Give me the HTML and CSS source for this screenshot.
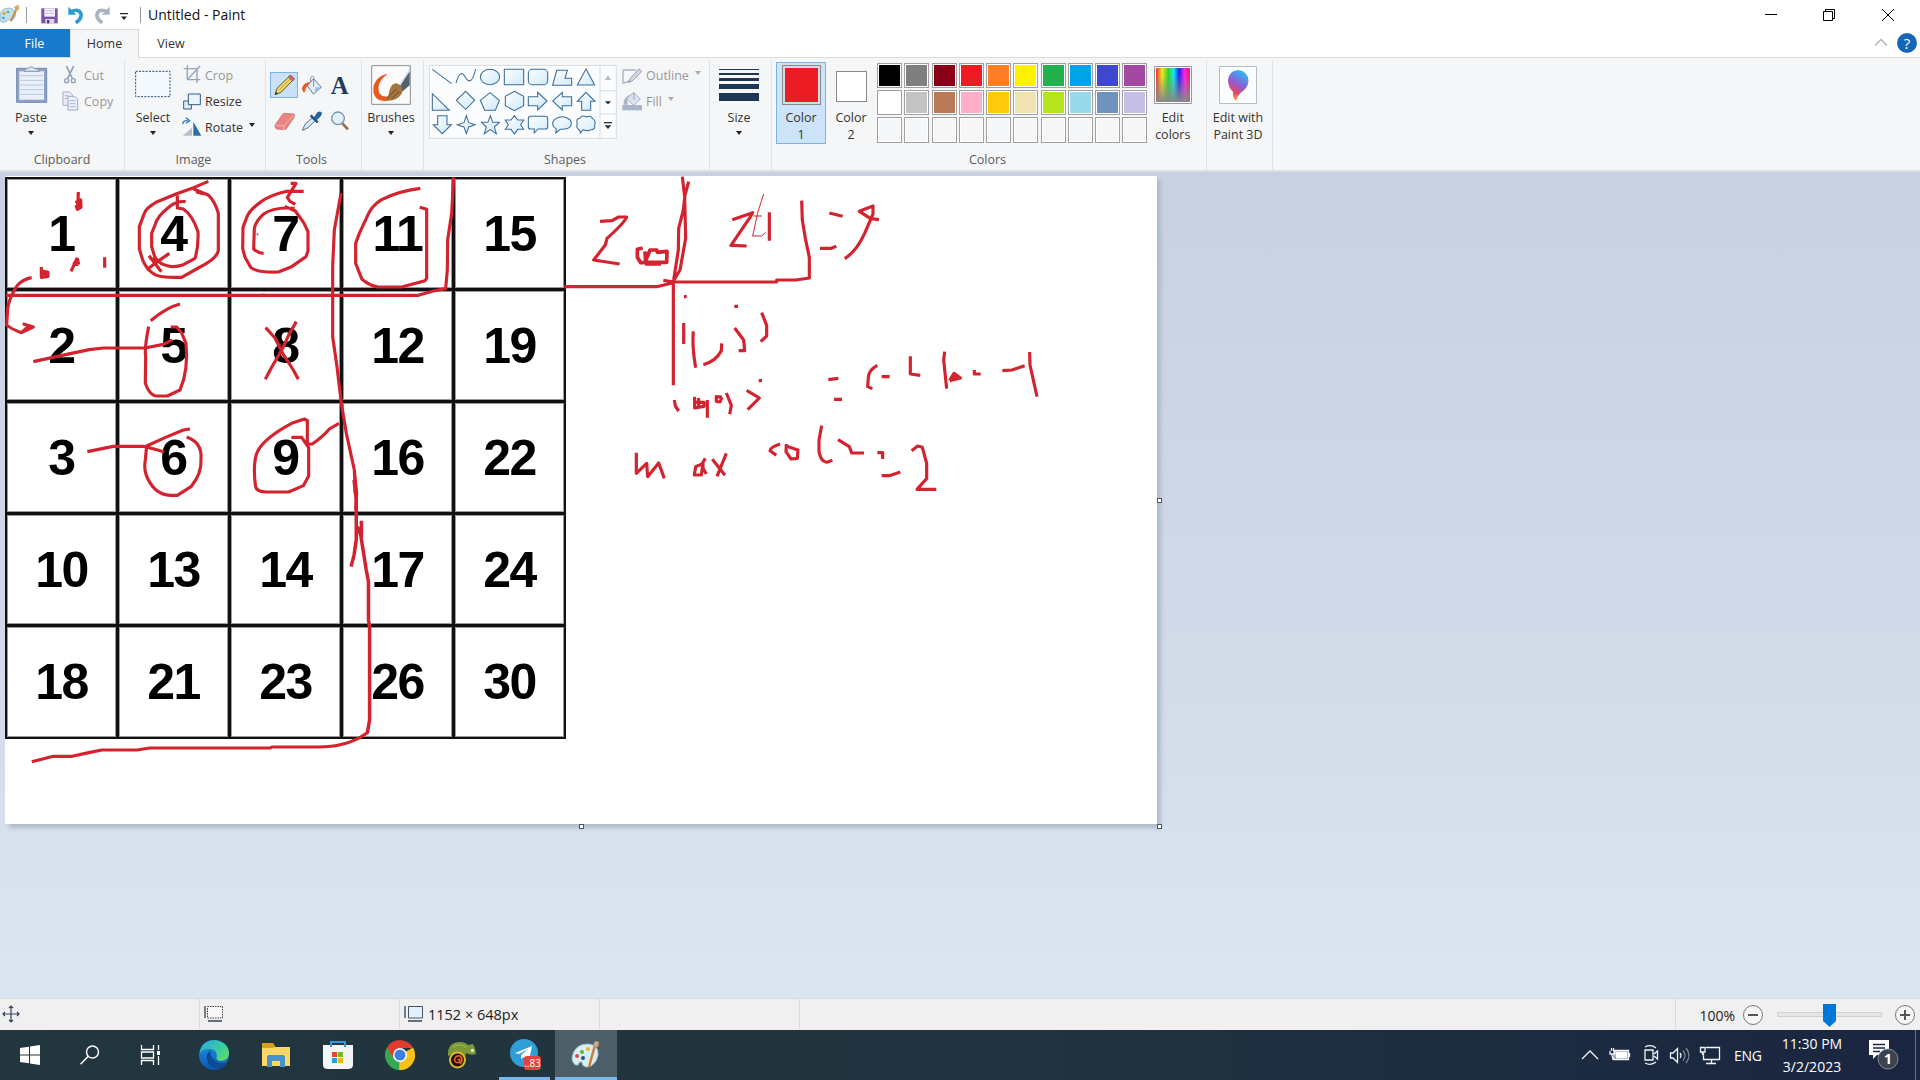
FILE: index.html
```html
<!DOCTYPE html>
<html lang="en">
<head>
<meta charset="utf-8">
<title>Untitled - Paint</title>
<link rel="stylesheet" href="styles.css">
</head>
<body>
<svg width="0" height="0" class="defs">
  <defs>
    <linearGradient id="shapeFill" x1="0" y1="0" x2="1" y2="1"><stop offset="0" stop-color="#fff"/><stop offset="1" stop-color="#cfeafb"/></linearGradient>
    <linearGradient id="spectrum"><stop offset="0" stop-color="#e33"/><stop offset=".18" stop-color="#f7e81c"/><stop offset=".36" stop-color="#2ed32e"/><stop offset=".52" stop-color="#1ee"/><stop offset=".68" stop-color="#22e"/><stop offset=".84" stop-color="#f2e"/><stop offset="1" stop-color="#e24"/></linearGradient>
    <linearGradient id="fade" x1="0" y1="0" x2="0" y2="1"><stop offset=".2" stop-color="#888" stop-opacity="0"/><stop offset="1" stop-color="#888"/></linearGradient>
    <linearGradient id="drop" x1=".7" y1="0" x2=".3" y2="1"><stop offset="0" stop-color="#25c3f5"/><stop offset=".45" stop-color="#8a5fd6"/><stop offset=".75" stop-color="#e8456b"/><stop offset="1" stop-color="#ffb02e"/></linearGradient>
    <linearGradient id="edgeA" x1="0" y1="0" x2="1" y2="1"><stop offset="0" stop-color="#2aa9e0"/><stop offset=".6" stop-color="#3ccf9a"/><stop offset="1" stop-color="#6be04a"/></linearGradient>
    <linearGradient id="edgeB" x1="0" y1="0" x2="0" y2="1"><stop offset="0" stop-color="#1f9be6"/><stop offset="1" stop-color="#0b56b4"/></linearGradient>
  </defs>
</svg>
<div class="window">
  <header class="titlebar">
    <svg class="app-icon" width="20" height="20" viewBox="0 0 60 60"><path d="M0 30Q6 12 28 12Q48 14 46 36Q40 52 30 48Q24 42 20 52Q8 60 0 50Z" fill="#bfe0ee" stroke="#7ca7bd" stroke-width="2"/><circle cx="12" cy="28" r="5" fill="#e8a23c"/><circle cx="10" cy="42" r="4" fill="#4b9cd6"/><circle cx="24" cy="24" r="4" fill="#5db85a"/><path d="M54 6L32 52" stroke="#c58a48" stroke-width="6"/><path d="M42 8L56 2L58 14L48 24Z" fill="#d9a968"/></svg>
    <i class="bar bar-a"></i>
    <svg class="save" width="17" height="16" viewBox="0 0 51 48"><path d="M1 1H50V46H1Z" fill="#7b54a6"/><path d="M10 1H42V26H10Z" fill="#f5f1fa"/><path d="M14 8H38M14 16H38" stroke="#c9bedb" stroke-width="3"/><path d="M13 33H40V46H13Z" fill="#ddd3ea"/><path d="M18 36H25V46H18Z" fill="#55367c"/></svg>
    <svg class="undo" width="18" height="18" viewBox="0 0 54 54"><path d="M4 2V26H28Z" fill="#2c9ad4"/><path d="M12 17Q36 6 42 24Q44 40 26 50" fill="none" stroke="#2c9ad4" stroke-width="11"/></svg>
    <svg class="redo" width="18" height="18" viewBox="0 0 54 54"><path d="M50 2V26H26Z" fill="#a9b5c2"/><path d="M42 17Q18 6 12 24Q10 40 28 50" fill="none" stroke="#a9b5c2" stroke-width="11"/></svg>
    <svg class="quick" width="8" height="8" viewBox="0 0 8 8"><path d="M0 .6H8" stroke="#222" stroke-width="1.2"/><path d="M1 3.5H7L4 7Z" fill="#222"/></svg>
    <i class="bar bar-b"></i>
    <h1 class="title">Untitled - Paint</h1>
    <svg class="controls" width="130" height="14" viewBox="0 0 130 14"><path d="M0 6.5H12" stroke="#000"/><path d="M58.5 3.5H67.5V12.5H58.5ZM60.500 3.500V1.500H69.500V10.500H67.500" fill="none" stroke="#000"/><path d="M117 1L129 13M129 1L117 13" stroke="#000" fill="none"/></svg>
  </header>
  <nav class="tabs">
    <span class="tab file">File</span><span class="tab home">Home</span><span class="tab view">View</span>
    <svg class="help" width="42" height="20" viewBox="0 0 42 20"><path d="M0 12.500L6 6.500L12 12.500" fill="none" stroke="#b5b5b5" stroke-width="1.500"/><circle cx="32" cy="10" r="10" fill="#1565b8"/><text x="32" y="15.500" text-anchor="middle" class="help-mark">?</text></svg>
  </nav>
  <section class="ribbon">
    <div class="group g-clipboard">
      <div class="body">
        <div class="big w62"><svg class="paste" width="32" height="38" viewBox="50 198 96 112"><path d="M52 204H142V306H52Z" fill="#8fa3c6" stroke="#7187ad" stroke-width="3"/><path d="M60 213H134V298H60Z" fill="#e9f0fa"/><path d="M62 226H132M62 240H132M62 254H132M62 268H132M62 282H132" stroke="#b9c6dc" stroke-width="3"/><path d="M74 213Q76 204 88 204Q96 194 104 204Q116 204 120 213Z" fill="#dde4ef" stroke="#8696b2" stroke-width="3"/></svg><span>Paste</span><b class="arrow"></b></div>
        <div class="rows clip-rows">
          <div class="row off"><svg width="20" height="20" viewBox="184 196 60 60"><path d="M200 199L218 236M222 199L204 236" stroke="#8f9fb8" stroke-width="5"/><circle cx="201" cy="243" r="6" fill="none" stroke="#8f9fb8" stroke-width="4"/><circle cx="221" cy="243" r="6" fill="none" stroke="#8f9fb8" stroke-width="4"/></svg><span>Cut</span></div>
          <div class="row off"><svg width="20" height="20" viewBox="182 273 60 60"><path d="M188 276H208L216 284V316H188Z" fill="#e9eef6" stroke="#a0b0cc" stroke-width="3"/><path d="M203 289H223L232 298V330H203Z" fill="#edf2fa" stroke="#98a9c8" stroke-width="3"/><path d="M193 287H203M193 295H200M208 302H226M208 311H226M208 320H226" stroke="#a7b6d0" stroke-width="3"/></svg><span>Copy</span></div>
        </div>
      </div><div class="label">Clipboard</div>
    </div>
    <div class="group g-image">
      <div class="body">
        <div class="big w56"><svg width="36" height="38" viewBox="407 198 108 114"><path d="M409 214H512V290H409Z" fill="#f4f9fe" stroke="#274a75" stroke-width="3" stroke-dasharray="6 4"/></svg><span>Select</span><b class="arrow"></b></div>
        <div class="rows">
          <div class="row off"><svg width="20" height="20" viewBox="548 196 60 60"><path d="M564 197V240H603M553 207H593V250M564 240L602 199" fill="none" stroke="#94a3bb" stroke-width="4"/></svg><span>Crop</span></div>
          <div class="row"><svg width="20" height="20" viewBox="546 274 60 60"><path d="M551 304H574V328H551Z" fill="#e2effa" stroke="#2b5d91" stroke-width="3"/><path d="M565 283H601V315H565Z" fill="#eaf5fd" stroke="#2b5d91" stroke-width="3"/></svg><span>Resize</span></div>
          <div class="row"><svg width="20" height="20" viewBox="546 348 60 60"><path d="M580 362V404H604Z" fill="#2d6ea7"/><path d="M576 380V404H548Z" fill="#b9bec6"/><path d="M548 370Q548 358 563 359" fill="none" stroke="#2d7bbd" stroke-width="4"/><path d="M558 350L569 359L558 367" fill="none" stroke="#2d7bbd" stroke-width="4"/></svg><span>Rotate</span><b class="arrow side"></b></div>
        </div>
      </div><div class="label">Image</div>
    </div>
    <div class="group g-tools">
      <div class="body tool-grid">
        <svg class="tool on" viewBox="811 216 84 78"><path d="M826 284L832 265L870 228L881 239L844 277Z" fill="#f5d860" stroke="#555537" stroke-width="3"/><path d="M839 270L875 233" stroke="#b99b35" stroke-width="3"/><path d="M866 231L873 225L885 237L878 243Z" fill="#d3646f" stroke="#6f5259" stroke-width="2"/><path d="M826 284L829 275L835 281Z" fill="#333"/></svg>
        <svg class="tool" viewBox="897 216 84 78"><path d="M924 256L944 236L967 262L943 282Z" fill="#e3eef7" stroke="#5f7a95" stroke-width="3"/><path d="M944 260V232Q939 224 935 235V248" fill="none" stroke="#8591a0" stroke-width="3"/><path d="M946 282L967 262L950 262Z" fill="#94bfe0"/><path d="M934 246Q914 248 909 264Q912 284 919 272Q920 262 928 256Z" fill="#e6592a"/></svg>
        <svg class="tool" viewBox="980 216 84 78"><text x="1021" y="282" class="letter" text-anchor="middle">A</text></svg>
        <svg class="tool" viewBox="811 323 84 78"><path d="M826 374L848 343Q851 338 858 339L884 341Q886 348 883 352L861 384Q858 389 851 388L830 386Q825 380 826 374Z" fill="#e98484" stroke="#c46d6d" stroke-width="2"/><path d="M828 374L852 377L884 343M852 377V388" fill="none" stroke="#f7b4b4" stroke-width="3"/></svg>
        <svg class="tool" viewBox="897 323 84 78"><path d="M910 390L918 372L940 352L949 361L927 382Z" fill="#d6e8f4" stroke="#57748e" stroke-width="3"/><path d="M935 345L956 366" stroke="#1f4f82" stroke-width="7"/><path d="M944 352L955 336Q965 330 969 338Q970 345 953 360Z" fill="#2764a4"/></svg>
        <svg class="tool" viewBox="980 323 84 78"><path d="M1029 369L1046 387" stroke="#9a6b4b" stroke-width="8"/><circle cx="1016" cy="354" r="19" fill="#e1f1fb" stroke="#8193a8" stroke-width="4"/></svg>
      </div><div class="label">Tools</div>
    </div>
    <div class="group g-brushes">
      <div class="body"><div class="big w56"><svg width="40" height="40" viewBox="1113 195 120 120"><path d="M1115 197H1231V313H1115Z" fill="#fbfbfb" stroke="#8a9099" stroke-width="3"/><path d="M1158 222Q1120 235 1120 270Q1122 305 1160 303L1180 285Q1150 296 1140 282Q1124 252 1162 222Z" fill="#e9591f"/><path d="M1229 214L1196 260L1206 275L1229 256Z" fill="#53626f"/><path d="M1229 208L1195 262" stroke="#dce4ea" stroke-width="5"/><path d="M1190 250Q1212 258 1206 280Q1190 306 1154 302Q1166 292 1168 272Q1174 250 1190 250Z" fill="#a8743e"/><path d="M1162 296Q1172 280 1190 268M1176 296Q1188 282 1198 274" stroke="#6d4520" stroke-width="3" fill="none"/></svg><span>Brushes</span><b class="arrow"></b></div></div>
    </div>
    <div class="group g-shapes">
      <div class="body">
        <svg class="shape-box" width="188" height="75" viewBox="27 195 564 225">
          <path d="M28.500 196.500H589V415H28.500Z" fill="#fbfcfd" stroke="#dadde1" stroke-width="3"/><path d="M540 197V415M540 272H589M540 342H589" stroke="#dadde1" stroke-width="3"/>
          <g fill="url(#shapeFill)" stroke="#3c6e9c" stroke-width="3.200"><path d="M37 208L95 251" /><path d="M108 249Q122 203 136 232Q154 262 167 207" fill="none"/><ellipse cx="210" cy="231" rx="29" ry="23"/><path d="M253 208H311V254H253Z"/><rect x="325" y="208" width="58" height="46" rx="12"/><path d="M410 211H442L435 235H455V256H398Z"/><path d="M498 207L524 255H472Z"/>
          <path d="M37 281V331H88Z"/><path d="M137 274L164 301L137 328L109 301Z"/><path d="M210 278L238 301L226 331H194L181 301Z"/><path d="M283 274L311 289V317L283 332L256 317V289Z"/><path d="M325 290H353V277L381 303L353 330V317H325Z"/><path d="M455 290H427V277L398 303L427 330V317H455Z"/><path d="M498 277L525 304H512V331H485V304H472Z"/>
          <path d="M53 347H81V374H94L67 401L40 374H53Z"/><path d="M139 347L146 368L165 374L146 381L139 401L132 381L112 374L132 368Z"/><path d="M211 347L218 367H238L223 381L229 401L211 389L193 401L199 381L185 367H204Z"/><path d="M283 347L293 360H311L302 374L311 388H293L283 402L273 388H256L265 374L256 360H273Z"/><path d="M332 349H376Q383 349 383 356V380Q383 387 376 387H354L343 399V387H332Q325 387 325 380V356Q325 349 332 349Z"/><path d="M409 387Q390 375 403 359Q427 341 451 360Q463 386 427 388H421L407 399Z"/><path d="M480 393Q466 381 472 371Q466 357 480 354Q487 344 500 351Q513 345 518 356Q529 363 524 374Q528 388 511 390Q500 394 490 389L481 399Z"/></g>
          <path d="M555 240H573L564 226Z" fill="#b8bcc2"/><path d="M555 304H573L564 313Z" fill="#222"/><path d="M552 368H576" stroke="#28323f" stroke-width="4"/><path d="M554 376H574L564 387Z" fill="#28323f"/>
        </svg>
        <div class="rows outline-rows">
          <div class="row off"><svg width="20" height="20" viewBox="608 198 60 60"><path d="M611 213H650M611 213V253L630 246" fill="none" stroke="#a9b3c4" stroke-width="4"/><path d="M628 251L633 238L659 210L667 217L641 244Z" fill="#d4d9e2" stroke="#929db0" stroke-width="3"/></svg><span>Outline</span><b class="arrow side"></b></div>
          <div class="row off"><svg width="20" height="20" viewBox="608 273 60 60"><path d="M609 315H668V331H609Z" fill="#aab4cd"/><path d="M621 295L643 278L663 297L643 316Z" fill="#dde4ef" stroke="#a4b0c8" stroke-width="3"/><path d="M644 299V276" stroke="#a4b0c8" stroke-width="4"/><path d="M636 283Q609 292 613 314H625L624 296Z" fill="#aab4cd"/></svg><span>Fill</span><b class="arrow side"></b></div>
        </div>
      </div><div class="label shapes-label">Shapes</div>
    </div>
    <div class="group g-size">
      <div class="body"><div class="big w56"><svg width="40" height="38" viewBox="0 0 40 38"><path d="M0 3.500H40" stroke="#1f3556"/><path d="M0 8H40" stroke="#1f3556" stroke-width="2"/><path d="M0 13.500H40" stroke="#1f3556" stroke-width="3"/><path d="M0 20.500H40" stroke="#1f3556" stroke-width="5"/><path d="M0 31H40" stroke="#1f3556" stroke-width="8"/></svg><span>Size</span><b class="arrow"></b></div></div>
    </div>
    <div class="group g-colors">
      <div class="body">
        <div class="color-btn selected"><i class="chip chip-1"></i><span>Color<br>1</span></div>
        <div class="color-btn"><i class="chip chip-2"></i><span>Color<br>2</span></div>
        <div class="palette">
          <i class="sw c1"></i><i class="sw c2"></i><i class="sw c3"></i><i class="sw c4"></i><i class="sw c5"></i><i class="sw c6"></i><i class="sw c7"></i><i class="sw c8"></i><i class="sw c9"></i><i class="sw c10"></i>
          <i class="sw c11"></i><i class="sw c12"></i><i class="sw c13"></i><i class="sw c14"></i><i class="sw c15"></i><i class="sw c16"></i><i class="sw c17"></i><i class="sw c18"></i><i class="sw c19"></i><i class="sw c20"></i>
          <i class="sw"></i><i class="sw"></i><i class="sw"></i><i class="sw"></i><i class="sw"></i><i class="sw"></i><i class="sw"></i><i class="sw"></i><i class="sw"></i><i class="sw"></i>
        </div>
        <div class="two-line edit"><svg width="38" height="38" viewBox="0 0 38 38"><path d="M.5.5H37.500V37.500H.5Z" fill="#fff" stroke="#999"/><path d="M2 2H36V36H2Z" fill="url(#spectrum)"/><path d="M2 2H36V36H2Z" fill="url(#fade)"/></svg><span>Edit<br>colors</span></div>
      </div><div class="label">Colors</div>
    </div>
    <div class="group g-3d">
      <div class="body"><div class="two-line"><svg width="38" height="38" viewBox="0 0 38 38"><path d="M.5.5H37.500V37.500H.5Z" fill="#fbfcfd" stroke="#b9bcc0"/><path d="M19 4Q29 5 29.500 15Q29 21 24 25Q18 29 17 35Q13 31 14 26Q9 21 9 14Q10 5 19 4Z" fill="url(#drop)"/></svg><span>Edit with<br>Paint 3D</span></div></div>
    </div>
  </section>
  <main class="workspace">
    <div class="canvas">
      <div class="matrix"><b>1</b><b>4</b><b>7</b><b>11</b><b>15</b><b>2</b><b>5</b><b>8</b><b>12</b><b>19</b><b>3</b><b>6</b><b>9</b><b>16</b><b>22</b><b>10</b><b>13</b><b>14</b><b>17</b><b>24</b><b>18</b><b>21</b><b>23</b><b>26</b><b>30</b></div>
      <svg class="ink" width="1152" height="648" viewBox="5 176 1152 648">
        <g transform="translate(0 170) scale(.33333)">
          <path d="M235 66L233 120M226 98L242 90L243 112L232 118L228 105M240 100V115M233 95L236 118"/>
          <path d="M124 291V322L144 319V307L126 303M128 311H139M213 304L232 263M218 280L236 284M232 265L236 284M314 262V293"/>
          <path d="M95 323Q70 327 52 346Q28 382 23 415L20 465Q30 475 64 488L100 471L68 461M64 488L80 474L100 471"/>
          <path d="M625 34L581 53L530 71L468 97Q438 114 433 130L418 170V237L428 270Q440 300 465 314Q485 324 545 322L600 291Q650 266 655 242V130Q646 96 626 76L581 57M588 65L612 72"/>
          <path d="M557 95Q530 92 508 110Q470 140 465 165L455 190V230L465 263Q480 284 505 288Q525 293 550 284L585 265Q596 230 594 185Q577 135 550 117L528 113M532 76V112M447 257L484 305M508 250L468 278L440 299M450 265L480 275M466 260V288"/>
          <path d="M872 40H888L862 83L870 94L886 103"/>
          <path d="M911 64H860Q810 76 785 94Q747 120 739 145L729 172L728 235L735 262L752 292Q770 308 835 306L875 290L918 260L924 242V185L911 158L886 123L854 109M884 115Q820 110 790 133Q766 155 763 175L761 237Q775 250 791 250"/>
          <path d="M770 193H775" stroke-width="5"/>
          <path d="M18 376H795"/>
          <path d="M540 402Q500 412 452 452M446 470Q433 535 437 560L436 640Q448 675 467 678H502L540 660Q566 600 558 520L545 489L530 471H512"/>
          <path d="M100 575L200 553L268 539L310 534H435L490 523L517 510"/>
          <path d="M797 473L825 504L848 550L880 600L895 628M889 455L868 491L848 535L815 592L796 628"/>
          <path d="M262 845L340 829H430L462 837L493 846M570 777L550 780L495 803L440 828L436 870Q430 900 444 928Q468 975 510 976H532L573 950Q606 909 603 868Q607 817 560 801"/>
          <path d="M874 802H905L926 833V918L910 947L866 966H800Q766 965 766 945Q757 868 776 838Q800 800 875 760L913 747L922 752V822H937Q970 799 988 777L1017 760"/>
        </g>
        <g transform="translate(230 170) scale(.33333)">
          <path d="M333 70L313 180L308 290V500L321 590L334 700L349 790L373 900L380 970L377 1020M373 900L376 970"/>
          <path d="M95 376H565L610 363L647 356L652 300L653 210L665 130L671 22"/>
          <path d="M571 55Q505 63 455 89Q429 105 417 128L388 190L377 220V280L396 328Q420 348 445 351H515L585 332L590 325V118L569 112"/>
        </g>
        <g transform="translate(550 170) scale(.33333)">
          <path d="M150 154L186 152L206 141H230Q222 160 171 205L166 225L131 270L209 282"/><path d="M278 234L262 238V262L272 278H285L300 240H320L322 247L351 244L350 277H287L285 244M285 282H333" stroke-width="11"/>
          <path d="M43 350H320L370 338M340 331L370 336H680V330H738L778 324V262L766 205L757 150L755 92"/>
          <path d="M370 330V646"/><path d="M397 20L404 80L407 205L390 300L371 332M416 35L405 75L400 120L386 175L385 240L371 330"/>
          <path d="M547 149L608 128L600 142L543 226L590 228M658 127V212"/><path d="M641 72L624 125L608 198H635L647 187M610 138H636" stroke-width="3"/>
          <path d="M838 129L878 139M810 235H844L859 229M987 149L962 146L928 124L969 108V132L944 190Q919 244 884 266"/>
          <path d="M402 380H410M553 409H564M401 459V522M430 484Q426 530 437 593M515 520L514 542Q498 573 460 584M554 474L581 510L584 542H566M635 428L650 466V498L632 515"/>
          <path d="M626 632H636M373 690L376 708L386 723M434 680V714L462 709V697L436 696M446 684V714M472 690V743M516 681L499 680V694L510 696L516 681M529 669L544 706L539 733M590 661L628 684L593 719"/>
          <path d="M835 629L865 625M852 688H876M982 586Q956 600 955 623L953 650L967 656M995 620H1019M1081 559V612L1111 616M1184 545L1181 570L1190 656M1199 632L1212 610L1231 624L1199 632M1212 610L1216 630M1273 600V612H1292M1357 602L1386 600L1424 587M1439 546L1440 585L1461 680"/>
          <path d="M259 848V910L290 880L293 920L326 879L343 925M466 865L456 882L437 890L433 915H454L459 880V895L469 912M487 868L525 916M529 850L501 919"/>
          <path d="M690 822Q660 832 660 842L679 856M709 822L708 845L723 867L742 865L744 840L710 829M815 767L807 810V845Q816 890 847 870M864 809L898 830L905 849H942M982 848H998V867M995 917H1018L1051 906M1085 842L1103 828L1117 832L1130 880V926L1101 958H1159"/>
        </g>
        <g transform="translate(0 480) scale(.36995 .33333)">
          <path d="M957 0L963 60V180L957 225L949 260M977 122V170L966 140M975 165L990 270L996 305V420L999 440V720L993 758Q965 782 925 793Q895 802 852 801H735L730 804H405L370 810H275L240 818L195 829H144L86 845"/>
        </g>
      </svg>
      <i class="handle h-right"></i><i class="handle h-bottom"></i><i class="handle h-corner"></i>
    </div>
  </main>
  <footer class="status">
    <div class="cell s1"><svg width="18" height="18" viewBox="0 0 18 18"><path d="M9 1V17M1 9H17M7 3L9 1L11 3M7 15L9 17L11 15M3 7L1 9L3 11M15 7L17 9L15 11" fill="none" stroke="#33455c" stroke-width="1.200"/></svg></div>
    <div class="cell s2"><svg width="20" height="18" viewBox="0 0 20 18"><path d="M3.500 1.500H18.500V13H3.500Z" fill="#f8f8f8" stroke="#445" stroke-dasharray="1.500 1"/><path d="M1 1V13M4 16H18" stroke="#345" stroke-width="1.300"/></svg></div>
    <div class="cell s3"><svg width="20" height="18" viewBox="0 0 20 18"><path d="M4.500 1.500H18.500V13H4.500Z" fill="#e2f0fb" stroke="#456"/><path d="M1 1V13M4 16H18" stroke="#345" stroke-width="1.300"/></svg><span class="dims">1152 × 648px</span></div>
    <div class="cell s4"></div><div class="cell s5"></div>
    <div class="zoom"><span>100%</span><svg width="180" height="28" viewBox="1740 1000 180 28"><g fill="#f5f5f5" stroke="#777"><circle cx="1753" cy="1014" r="9.500"/><circle cx="1905" cy="1014" r="9.500"/></g><path d="M1748 1014H1758M1900 1014H1910M1905 1009V1019" stroke="#555" stroke-width="2"/><path d="M1777.500 1011.500H1881.500V1015.500H1777.500Z" fill="#e6e6e6" stroke="#d0d0d0"/><path d="M1823 1003H1836V1020L1829.500 1026L1823 1020Z" fill="#0078d7"/></svg></div>
  </footer>
</div>
<div class="taskbar">
  <div class="task small"><svg width="20" height="20" viewBox="0 0 20 20"><path d="M0 3L9 1.700V9.500H0ZM10 1.500L20 0V9.500H10ZM0 10.500H9V18.300L0 17ZM10 10.500H20V20L10 18.500Z" fill="#fff"/></svg></div>
  <div class="task small"><svg width="20" height="20" viewBox="0 0 20 20"><circle cx="12.500" cy="7" r="6" fill="none" stroke="#fff" stroke-width="1.400"/><path d="M8.300 11.300L.5 19.200" stroke="#fff" stroke-width="1.500"/></svg></div>
  <div class="task small"><svg width="21" height="20" viewBox="0 0 21 20"><path d="M1.500 0V4.500H13.500V0M1.500 20V15.500H13.500V20M1.500 7H13.500V13H1.500ZM18.500 0V5M18.500 11V20" fill="none" stroke="#fff" stroke-width="1.300"/><path d="M18.500 6V10" stroke="#fff" stroke-width="3"/></svg></div>
  <div class="task"><svg width="30" height="30" viewBox="0 0 30 30"><circle cx="15" cy="15" r="15" fill="url(#edgeB)"/><path d="M1 11Q4 0 16 0Q30 2 30 14Q29 21 21 21Q16 20 18 16Q18 10 12 9Q4 8 1 13Z" fill="url(#edgeA)"/><path d="M12 10Q5 15 9 23Q13 29 21 28.500Q27 26 28.500 22Q22 25 16 21Q10 16 12 10Z" fill="#104a91"/><path d="M28.500 21L31 20L30 26L24 29Q28 25 28.500 21Z" fill="#22363f"/></svg></div>
  <div class="task"><svg width="28" height="26" viewBox="0 0 28 26"><path d="M0 2H11L13 5H28V24H0Z" fill="#fbd66b"/><path d="M0 1H11L13 4L11 6H0Z" fill="#d8a11c"/><path d="M5 25V15Q5 13 7 13H21Q23 13 23 15V25H18V19H10V25Z" fill="#4593cf"/></svg></div>
  <div class="task"><svg width="30" height="30" viewBox="0 0 30 30"><path d="M8 7V2H22V7" fill="none" stroke="#2b9fe0" stroke-width="2"/><path d="M0 5H30V25Q30 29 25 29H5Q0 29 0 25Z" fill="#f4f5f6"/><path d="M8 2V7M22 2V7" stroke="#2b9fe0" stroke-width="2"/><path d="M9 12H14V17H9Z" fill="#e4472a"/><path d="M15 12H20V17H15Z" fill="#76b528"/><path d="M9 18H14V23H9Z" fill="#229fe0"/><path d="M15 18H20V23H15Z" fill="#f5b800"/></svg></div>
  <div class="task"><svg width="30" height="30" viewBox="0 0 30 30"><path d="M15 15L2 7.500A15 15 0 0 0 14 30L21 19Z" fill="#37a852"/><path d="M15 15L28 7.500A15 15 0 0 1 14 30Z" fill="#fbc116"/><path d="M2 7.500L8.500 18L15 8H28Q25 1 15 0Q6 0 2 7.500Z" fill="#e33b2e"/><circle cx="15" cy="15" r="7" fill="#fff"/><circle cx="15" cy="15" r="5.500" fill="#3e7ee5"/></svg></div>
  <div class="task"><svg width="30" height="28" viewBox="0 0 30 28"><path d="M1 15Q0 1 13 1Q18 1 21 4L26 3Q28 6 29 13Q24 15 19 12L18 16L4 14Z" fill="#7c9938"/><circle cx="10.500" cy="19" r="8.500" fill="#dcb830"/><circle cx="10.500" cy="19" r="6.500" fill="#1e0b06"/><path d="M10.500 19Q13.500 17 12.500 21Q9 23 7.500 19Q8 14.500 13 15Q17 19 13 23" fill="none" stroke="#e45a20" stroke-width="1.800"/><circle cx="25.500" cy="9.500" r="1.800" fill="#dfe8c0"/><path d="M6 6Q12 2 19 6" stroke="#a6bd5c" fill="none"/></svg></div>
  <div class="task running"><svg class="telegram" width="34" height="34" viewBox="0 0 34 34"><circle cx="15" cy="15" r="14" fill="#2f9fd8"/><path d="M6 15L23 8L20 23L15 19L12 21V17L19 11L10 16Z" fill="#fff"/><rect x="15" y="18" width="17" height="14" rx="3" fill="#e5413e"/><text x="23.500" y="29" text-anchor="middle" class="count">..83</text></svg></div>
  <div class="task active"><svg width="30" height="28" viewBox="0 0 30 28"><path d="M1 17Q3 3 17 3Q28 4 27 14Q25 24 17 26Q11 26 11 21Q8 20 7 24Q2 25 1 17Z" fill="#d9edf5" stroke="#9bc3d4"/><circle cx="6" cy="15" r="2" fill="#d84c4c"/><circle cx="11" cy="11" r="2" fill="#5aae49"/><circle cx="17" cy="8" r="2" fill="#ecb52b"/><circle cx="12" cy="17" r="2" fill="#26518d"/><path d="M24 4L18 26" stroke="#c9803a" stroke-width="2.500"/><path d="M22 5L24 0L28 1L27 6Z" fill="#d5a87c"/></svg></div>
  <div class="tray">
    <svg width="146" height="26" viewBox="1580 1042 146 26"><g fill="none" stroke="#f2f5f8" stroke-width="1.300"><path d="M1582 1059L1590 1051L1598 1059"/><path d="M1614 1050.500H1628.500V1059.500H1614ZM1629.500 1053V1057M1612 1054V1056Q1613 1058 1613 1060M1610 1051V1054H1615V1051M1611.500 1048V1051M1613.500 1048V1051"/><path d="M1616 1052H1627V1058H1616Z" fill="#fff"/><path d="M1645 1050H1653V1060H1645ZM1654 1054L1657.500 1051V1059L1654 1056M1645 1047Q1651 1044 1656 1048M1645 1063Q1651 1066 1656 1062"/><path d="M1670.500 1053H1673L1677.500 1048.500V1062.500L1673 1058H1670.500ZM1680 1053Q1682 1055.500 1680 1058"/><path d="M1683 1050.500Q1687 1055.500 1683 1060.500M1686 1048Q1692 1055.500 1686 1063" stroke="#7c8799"/><path d="M1706 1047.500H1719.500V1059.500H1703.500V1053M1711.500 1060V1063M1706 1063.500H1716M1700.500 1047.500H1705V1052H1700.500ZM1702.500 1052V1055"/></g></svg>
    <span class="lang">ENG</span>
    <span class="clock">11:30 PM<br>3/2/2023</span>
    <svg class="notice" width="34" height="34" viewBox="0 0 34 34"><path d="M1 2H21V17H9L5 21V17H1Z" fill="#fff"/><path d="M5 6.500H17M5 10H17M5 13.500H12" stroke="#1d2842" stroke-width="1.300"/><circle cx="20" cy="21" r="10" fill="#3c4350" stroke="#858a94"/><text x="20" y="26" class="badge" text-anchor="middle">1</text></svg>
    <i class="edge-line"></i>
  </div>
</div>
</body>
</html>
```
FILE: styles.css
```css
*{box-sizing:border-box}
body{margin:0;width:1920px;height:1080px;overflow:hidden;font:12.5px/17px "Open Sans","Noto Sans",sans-serif;color:#333;display:flex;flex-direction:column;background:#fff}
svg{display:block;flex:none}
.defs{position:absolute}
.window{flex:1;display:flex;flex-direction:column;min-height:0}
.titlebar{height:29px;display:flex;align-items:center;background:#fff}
.app-icon{margin-top:-2px}
.bar{width:1px;height:16px;background:#999}
.bar-a{margin-left:6px}
.save{margin-left:14px;margin-top:2px}
.undo{margin-left:9px}
.redo{margin-left:8px}
.quick{margin-left:9px;margin-top:4px}
.bar-b{margin-left:12px}
.title{margin:0 0 0 7px;font-size:14px;line-height:20px;font-weight:400;color:#111;flex:1}
.controls{margin-right:25px}
.tabs{height:29px;display:flex;border-bottom:1px solid #dadbdc;background:#fff}
.tab{height:28px;line-height:29px;text-align:center}
.file{width:70px;background:#1979ca;color:#fff;padding-right:1px}
.home{width:69px;background:#f5f6f7;border:1px solid #dadbdc;border-bottom:0;height:29px;line-height:28px}
.view{width:64px}
.help{margin:4px 3px 0 auto}
.help-mark{font-size:15px;fill:#fff}
.ribbon{height:114px;background:#f5f6f7;display:flex;border-bottom:2px solid #dbe0e6}
.group{height:110px;margin-top:2px;border-right:1px solid #e1e2e4;display:flex;flex-direction:column}
.body{height:90px;display:flex}
.label{text-align:center;line-height:20px;color:#5c5c5c}
.g-clipboard{width:125px}
.g-image{width:141px}
.g-image .label,.shapes-label,.g-colors .label{padding-right:3px}
.g-tools{width:96px}
.g-tools .label{padding-right:4px}
.g-brushes{width:62px}
.g-shapes{width:286px}
.g-size{width:62px}
.g-colors{width:435px}
.g-3d{width:66px}
.big{display:flex;flex-direction:column;align-items:center;padding-top:6px}
.big svg{height:38px}
.big span{margin-top:5px}
.paste{margin-left:2px}
.w62{width:62px}
.w56{width:56px}
.arrow{width:0;height:0;border:3.5px solid transparent;border-top:4px solid #222;border-bottom:0;margin-top:5px}
.arrow.side{margin:-4px 0 0 6px}
.off{color:#999}
.off .arrow{border-top-color:#aaa}
.rows{padding-top:2px}
.row{height:26px;display:flex;align-items:center;white-space:nowrap}
.row span{margin-left:3px}
.clip-rows{margin-left:-1px}
.g-image .row{margin-left:1px}
.tool-grid{display:grid;grid-template-columns:repeat(3,28px);grid-template-rows:26px 26px;row-gap:10px;padding:12px 0 0 4px}
.tool{width:28px;height:26px}
.on{background:#c9e0f7;outline:1px solid #7fb2e5;outline-offset:-1px}
.letter{font:bold 74px "Liberation Serif",serif;fill:#1f3a60}
.g-brushes .big{padding-top:5px;margin-left:1px}
.g-brushes .big svg{height:40px}
.g-brushes .big span{margin-top:4px}
.g-size .big{margin-left:1px}
.shape-box{margin:5px 0 0 5px}
.outline-rows{margin-left:5px}
.outline-rows .row span{margin-left:4px}
.g-colors .body{padding-left:4px}
.color-btn{width:50px;height:82px;margin-top:2px;text-align:center;display:flex;flex-direction:column;align-items:center;justify-content:flex-end;padding-bottom:1px}
.color-btn span,.two-line span{display:block}
.selected{background:#cce3f9;border:1px solid #7db2e8;padding-bottom:0}
.chip{display:block;border:1px solid #888}
.chip-1{width:39px;height:40px;background:#ed1c24;margin-bottom:4px;box-shadow:inset 0 0 0 2px #d5dbe3}
.chip-2{width:31px;height:31px;background:#fff;margin-bottom:7px}
.palette{display:grid;grid-template-columns:repeat(10,25px);grid-template-rows:25px 25px 26px;gap:2px 2.25px;margin:3px 0 0 1px}
.sw{border:1px solid #a0a0a0;background:#f5f6f7;box-shadow:inset 0 0 0 1px #fff}
.c1{background:#000}.c2{background:#7f7f7f}.c3{background:#880015}.c4{background:#ed1c24}.c5{background:#ff7f27}.c6{background:#fff200}.c7{background:#22b14c}.c8{background:#00a2e8}.c9{background:#3f48cc}.c10{background:#a349a4}
.c11{background:#fff}.c12{background:#c3c3c3}.c13{background:#b97a57}.c14{background:#ffaec9}.c15{background:#ffc90e}.c16{background:#efe4b0}.c17{background:#b5e61d}.c18{background:#99d9ea}.c19{background:#7092be}.c20{background:#c8bfe7}
.two-line{padding-top:6px;display:flex;flex-direction:column;align-items:center;text-align:center;gap:5px;white-space:nowrap}
.edit{width:51px}
.g-3d .two-line{width:62px}
.workspace{flex:1;min-height:0;background:linear-gradient(#c8d1e1,#d0dae8 55%,#dce6f1);padding:4px 0 0 5px}
.canvas{position:relative;width:1152px;height:648px;background:#fff;box-shadow:4px 4px 4px #b0bccb;padding-top:1px}
.matrix{width:561px;height:562px;display:grid;grid-template-columns:repeat(5,112px);grid-template-rows:repeat(5,112px);border-left:2px solid #111;border-top:2px solid #111}
.matrix b{border-right:3px solid #111;border-bottom:3px solid #111;box-shadow:inset -1px -1px #999,inset 1px 1px #999;font:bold 50px/111px "Liberation Sans",sans-serif;letter-spacing:-1.5px;color:#000;text-align:center}
.matrix b:nth-child(5n){border-right-width:2px;width:111px}
.matrix b:nth-child(n+21){border-bottom-width:2px}
.ink{position:absolute;left:0;top:0;fill:none;stroke:#d3232f;stroke-width:9.500;stroke-linejoin:round}
.handle{position:absolute;width:5px;height:5px;border:1px solid #555;background:#fff}
.h-right{left:1152px;top:322px}
.h-bottom{left:574px;top:648px}
.h-corner{left:1152px;top:648px}
.status{height:32px;background:#f0f0f0;display:flex;border-top:1px solid #d5dbe3}
.cell{border-right:1px solid #d9dadb;height:30px;display:flex;align-items:center;padding-left:4px}
.s1{width:200px;padding-left:2px}.s2{width:200px}.s3{width:200px}.s4{width:200px}.s5{width:876px}
.dims{font-size:14.5px;margin:1px 0 0 4px;color:#222}
.zoom{display:flex;align-items:center;margin-left:auto}
.zoom span{font-size:14px;margin:1px 5px 0 0;color:#222}
.taskbar{height:50px;background:linear-gradient(90deg,#22363f,#21343f 50%,#1b2a40 85%,#1b2540);display:flex;color:#fff}
.task{width:62px;height:50px;display:flex;align-items:center;justify-content:center}
.small{width:60px}
.small:nth-child(3){width:63px;padding-right:2px}
.running{background:linear-gradient(#76b9ed,#76b9ed) center bottom/51px 3px no-repeat}
.telegram{margin-left:3px}
.active{background:#4c5f68;border-bottom:3px solid #76b9ed;padding-top:3px}
.count{font-size:10px;fill:#fff}
.tray{margin-left:auto;display:flex;align-items:center;width:340px;font-size:14px;line-height:23px}
.lang{width:30px;margin-left:8px;letter-spacing:-.3px}
.clock{width:96px;text-align:center}
.notice{margin-left:8px}
.badge{font:bold 14px "Open Sans",sans-serif;fill:#fff}
.edge-line{width:1px;height:50px;background:#66728a;margin-left:13px}
```
